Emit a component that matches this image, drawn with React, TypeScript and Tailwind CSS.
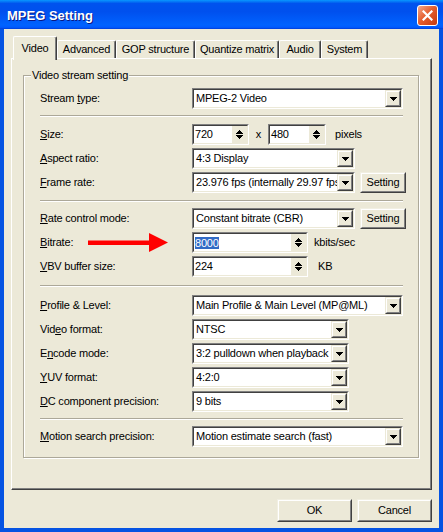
import React from "react";

const FONT = "font-['Liberation_Sans',Arial,sans-serif]";

function Tri({ dir = "down" }: { dir?: "down" | "up" }) {
  const rows = dir === "down" ? [0, 1, 2, 3] : [3, 2, 1, 0];
  return (
    <svg width="7" height="4" viewBox="0 0 7 4" className="block" shapeRendering="crispEdges">
      {rows.map((r, i) => (
        <rect key={i} x={r} y={i} width={7 - 2 * r} height={1} fill="#000" />
      ))}
    </svg>
  );
}

function Sunken({ className = "", children }: { className?: string; children: React.ReactNode }) {
  return (
    <div className={`flex h-[21px] shrink-0 border border-t-[#808080] border-l-[#808080] border-r-white border-b-white ${className}`}>
      <div className="flex flex-1 min-w-0 border border-t-[#404040] border-l-[#404040] border-r-[#ECE9D8] border-b-[#ECE9D8] bg-white">
        {children}
      </div>
    </div>
  );
}

function ArrowBtn() {
  return (
    <div className="flex w-[16px] shrink-0 border border-t-[#ECE9D8] border-l-[#ECE9D8] border-r-[#404040] border-b-[#404040]">
      <div className="flex flex-1 items-center justify-center border border-t-white border-l-white border-r-[#808080] border-b-[#808080] bg-[#ECE9D8]">
        <Tri />
      </div>
    </div>
  );
}

function Spin() {
  return (
    <div className="flex w-[15px] shrink-0 flex-col items-center justify-center gap-[1px] bg-[#ECE9D8]">
      <Tri dir="up" />
      <Tri dir="down" />
    </div>
  );
}

function Combo({ className, text }: { className: string; text: string }) {
  return (
    <Sunken className={className}>
      <div className="flex flex-1 min-w-0 items-center overflow-hidden whitespace-nowrap pl-[2px] leading-[13px]">
        {text}
      </div>
      <ArrowBtn />
    </Sunken>
  );
}

function SpinEdit({ className, children }: { className: string; children: React.ReactNode }) {
  return (
    <Sunken className={className}>
      <div className="flex flex-1 min-w-0 items-center overflow-hidden whitespace-nowrap pl-[1px] leading-[13px]">
        {children}
      </div>
      <Spin />
    </Sunken>
  );
}

function Btn({ className = "", children }: { className?: string; children: React.ReactNode }) {
  return (
    <div className={`flex shrink-0 border border-t-[#F1EFE2] border-l-[#F1EFE2] border-r-[#404040] border-b-[#404040] bg-[#ECE9D8] ${className}`}>
      <div className="flex flex-1 items-center justify-center border border-t-white border-l-white border-r-[#808080] border-b-[#808080]">
        {children}
      </div>
    </div>
  );
}

function Lbl({ a = "", u, b = "" }: { a?: string; u: string; b?: string }) {
  return (
    <span className="whitespace-nowrap">
      {a}
      <span className="underline decoration-1 underline-offset-[1px]">{u}</span>
      {b}
    </span>
  );
}

function Row({ label, children }: { label: React.ReactNode; children: React.ReactNode }) {
  return (
    <div className="flex h-[21px] items-center">
      <div className="flex w-[152px] shrink-0 items-center">{label}</div>
      {children}
    </div>
  );
}

function Sep({ className }: { className: string }) {
  return <div className={`h-[2px] w-[363px] border-t border-b border-t-[#ACA899] border-b-white ${className}`} />;
}

function Tab({ w, selected, children }: { w: string; selected?: boolean; children: React.ReactNode }) {
  if (selected) {
    return (
      <div
        className={`relative z-10 -mb-[2px] flex h-[24px] shrink-0 items-center justify-center rounded-t-[2px] border-t border-l border-r border-t-white border-l-white border-r-[#404040] bg-[#ECE9D8] shadow-[inset_-1px_0_0_#808080] ${w}`}
      >
        {children}
      </div>
    );
  }
  return (
    <div
      className={`flex h-[18px] shrink-0 items-center justify-center rounded-t-[2px] border-t border-l border-r border-t-white border-l-white border-r-[#404040] bg-[#ECE9D8] shadow-[inset_-1px_0_0_#808080] ${w}`}
    >
      {children}
    </div>
  );
}

export default function App() {
  return (
    <div className={`flex h-[532px] w-[443px] flex-col text-[11px] tracking-[-0.2px] text-black ${FONT}`}>
      {/* Title bar */}
      <div className="flex h-[29px] shrink-0 items-start pl-[7px] pr-[5px] bg-[linear-gradient(180deg,#0997ff_0%,#0053ee_12%,#0050ee_40%,#0063ff_86%,#005bff_94%,#003dd7_100%)]">
        <span className="mt-[8px] text-[13px] font-bold leading-[16px] tracking-[0px] text-white [text-shadow:1px_1px_0_#0a1883]">
          MPEG Setting
        </span>
        <div className="ml-auto mt-[5px] flex h-[21px] w-[21px] items-center justify-center rounded-[3px] border border-white bg-[linear-gradient(135deg,#f4a98c_0%,#e55f30_45%,#c5380c_100%)]">
          <svg width="11" height="11" viewBox="0 0 11 11">
            <path d="M1.5 1.5 L9.5 9.5 M9.5 1.5 L1.5 9.5" stroke="#fff" strokeWidth="2.2" strokeLinecap="square" />
          </svg>
        </div>
      </div>

      {/* Body */}
      <div className="flex flex-1 flex-col border-x-[4px] border-b-[4px] border-[#0553E2] bg-[#ECE9D8]">
        {/* Tabs */}
        <div className="ml-[9px] mt-[7px] flex h-[22px] items-end">
          <Tab w="w-[44px]" selected>
            Video
          </Tab>
          <Tab w="w-[59px]">Advanced</Tab>
          <Tab w="w-[79px]">GOP structure</Tab>
          <Tab w="w-[84px]">Quantize matrix</Tab>
          <Tab w="w-[42px]">Audio</Tab>
          <Tab w="w-[47px]">System</Tab>
        </div>

        {/* Panel */}
        <div className="ml-[7px] flex h-[432px] w-[421px] flex-col border border-t-white border-l-white border-r-[#404040] border-b-[#404040] shadow-[inset_-1px_-1px_0_#808080]">
          <div className="ml-[11px] mt-[16px] flex h-[383px] w-[396px] flex-col border border-[#ACA899] pl-[16px] shadow-[inset_1px_1px_0_#fff,1px_1px_0_#fff]">
            <span className="-ml-[9px] -mt-[7px] self-start bg-[#ECE9D8] px-[1px] leading-[13px]">Video stream setting</span>

            <div className="mt-[6px]">
              <Row label={<Lbl a="Stream " u="t" b="ype:" />}>
                <Combo className="w-[211px]" text="MPEG-2 Video" />
              </Row>
            </div>

            <Sep className="mt-[6px] mb-[7px]" />

            <div className="flex flex-col gap-[3px]">
              <Row label={<Lbl u="S" b="ize:" />}>
                <SpinEdit className="w-[57px]">720</SpinEdit>
                <span className="w-[19px] text-center">x</span>
                <SpinEdit className="w-[58px]">480</SpinEdit>
                <span className="ml-[9px]">pixels</span>
              </Row>
              <Row label={<Lbl u="A" b="spect ratio:" />}>
                <Combo className="w-[163px]" text="4:3 Display" />
              </Row>
              <Row label={<Lbl u="F" b="rame rate:" />}>
                <Combo className="w-[163px]" text="23.976 fps (internally 29.97 fps)" />
                <Btn className="ml-[5px] h-[21px] w-[46px]">Setting</Btn>
              </Row>
            </div>

            <Sep className="mt-[7px] mb-[6px]" />

            <div className="flex flex-col gap-[3px]">
              <Row label={<Lbl u="R" b="ate control mode:" />}>
                <Combo className="w-[163px]" text="Constant bitrate (CBR)" />
                <Btn className="ml-[5px] h-[21px] w-[46px]">Setting</Btn>
              </Row>
              <Row
                label={
                  <>
                    <span className="w-[48px] shrink-0">
                      <Lbl u="B" b="itrate:" />
                    </span>
                    <svg width="80" height="21" viewBox="0 0 80 21" className="block shrink-0">
                      <rect x="0" y="8.5" width="63" height="4.5" fill="#f00" />
                      <polygon points="61,1 80,10.5 61,20" fill="#f00" />
                    </svg>
                  </>
                }
              >
                <SpinEdit className="w-[116px]">
                  <span className="bg-[#316AC5] leading-[12px] text-white">8000</span>
                </SpinEdit>
                <span className="ml-[6px]">kbits/sec</span>
              </Row>
              <Row label={<Lbl u="V" b="BV buffer size:" />}>
                <SpinEdit className="w-[116px]">224</SpinEdit>
                <span className="ml-[10px]">KB</span>
              </Row>
            </div>

            <Sep className="mt-[8px] mb-[8px]" />

            <div className="flex flex-col gap-[3px]">
              <Row label={<Lbl u="P" b="rofile & Level:" />}>
                <Combo className="w-[211px]" text="Main Profile & Main Level (MP@ML)" />
              </Row>
              <Row label={<Lbl a="Vid" u="e" b="o format:" />}>
                <Combo className="w-[157px]" text="NTSC" />
              </Row>
              <Row label={<Lbl a="E" u="n" b="code mode:" />}>
                <Combo className="w-[157px]" text="3:2 pulldown when playback" />
              </Row>
              <Row label={<Lbl u="Y" b="UV format:" />}>
                <Combo className="w-[157px]" text="4:2:0" />
              </Row>
              <Row label={<Lbl u="D" b="C component precision:" />}>
                <Combo className="w-[157px]" text="9 bits" />
              </Row>
            </div>

            <Sep className="mt-[6px] mb-[6px]" />

            <Row label={<Lbl u="M" b="otion search precision:" />}>
              <Combo className="w-[211px]" text="Motion estimate search (fast)" />
            </Row>
          </div>
        </div>

        {/* Buttons */}
        <div className="mr-[7px] mt-[9px] flex justify-end gap-[5px]">
          <Btn className="h-[23px] w-[75px]">OK</Btn>
          <Btn className="h-[23px] w-[75px]">Cancel</Btn>
        </div>
      </div>
    </div>
  );
}
